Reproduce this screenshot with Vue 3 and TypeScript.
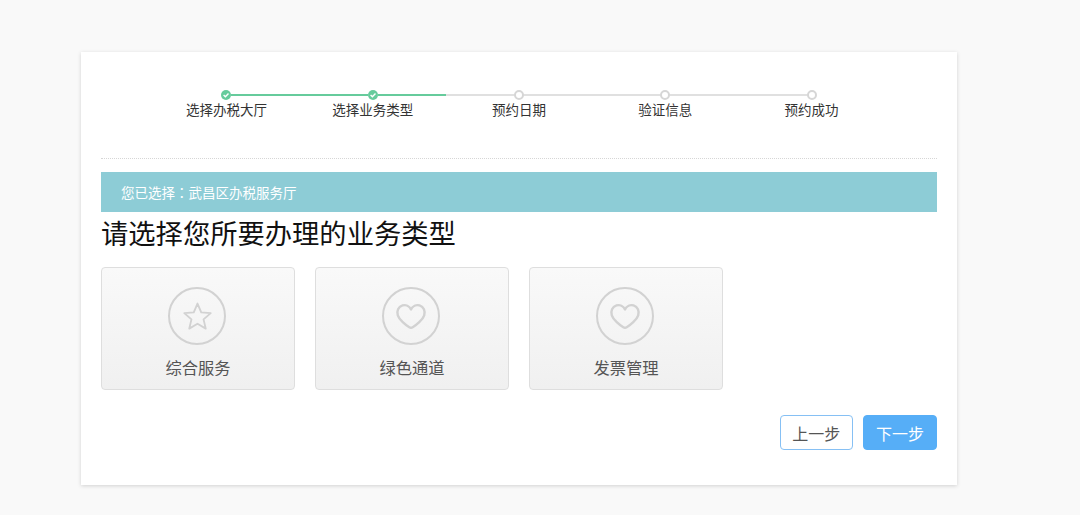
<script setup lang="ts">
interface Step { label: string; state: 'done' | 'current' | 'todo' }
interface Biz { label: string; icon: 'star' | 'heart' }
const steps: Step[] = [
  { label: '选择办税大厅', state: 'done' },
  { label: '选择业务类型', state: 'current' },
  { label: '预约日期', state: 'todo' },
  { label: '验证信息', state: 'todo' },
  { label: '预约成功', state: 'todo' },
]
const items: Biz[] = [
  { label: '综合服务', icon: 'star' },
  { label: '绿色通道', icon: 'heart' },
  { label: '发票管理', icon: 'heart' },
]
</script>

<template>
  <div class="page">
    <main class="card">
      <ol class="steps">
        <li v-for="(s, i) in steps" :key="s.label" class="step" :class="[s.state, { last: i === steps.length - 1 }]">
          <span class="node">
            <svg v-if="s.state !== 'todo'" viewBox="0 0 10 10" width="10" height="10">
              <circle cx="5" cy="5" r="5" fill="#66cb9c" />
              <path d="M2.6 5.1 4.4 6.8 7.5 3.6" fill="none" stroke="#fff" stroke-width="1.4" />
            </svg>
          </span>
          <span class="step-label">{{ s.label }}</span>
        </li>
      </ol>
      <div class="divider"></div>
      <div class="banner">您已选择<span class="colon">：</span>武昌区办税服务厅</div>
      <h1 class="title">请选择您所要办理的业务类型</h1>
      <div class="options">
        <button v-for="it in items" :key="it.label" class="option" type="button">
          <span class="circle">
            <svg v-if="it.icon === 'star'" viewBox="0 0 30 30" width="33" height="33">
              <path d="M15 3.2 18.4 11.2 27 11.9 20.5 17.6 22.5 26 15 21.6 7.5 26 9.5 17.6 3 11.9 11.6 11.2Z" fill="none" stroke="#d2d2d2" stroke-width="1.7" stroke-linejoin="round" />
            </svg>
            <svg v-else viewBox="0 0 30 30" width="36" height="36">
              <path d="M15 9.6C13.6 6.6 10.6 5.4 7.9 6.2 4.4 7.3 2.9 11 4 14.4 5.2 18.2 10.6 22.6 13.6 24.4 14.5 25 15.5 25 16.4 24.4 19.4 22.6 24.8 18.2 26 14.4 27.1 11 25.6 7.3 22.1 6.2 19.4 5.4 16.4 6.6 15 9.6Z" fill="none" stroke="#d2d2d2" stroke-width="2" stroke-linejoin="round" />
            </svg>
          </span>
          <span class="option-label">{{ it.label }}</span>
        </button>
      </div>
      <div class="actions">
        <button class="btn prev" type="button">上一步</button>
        <button class="btn next" type="button">下一步</button>
      </div>
    </main>
  </div>
</template>

<style>
html, body { margin: 0; background: #f9f9f9; }
</style>

<style scoped>
.page {
  width: 1080px;
  height: 515px;
  box-sizing: border-box;
  padding: 52px 123px 0 81px;
  background: #f9f9f9;
  overflow: hidden;
  font-family: "Noto Sans CJK SC", "Liberation Sans", sans-serif;
}
.card {
  height: 433px;
  box-sizing: border-box;
  padding: 38px 20px 0;
  background: #fff;
  box-shadow: 0 1px 4px rgba(0, 0, 0, 0.16);
}
.steps {
  list-style: none;
  margin: 0;
  padding: 0;
  display: flex;
  justify-content: center;
}
.step {
  position: relative;
  width: 146.3px;
  display: flex;
  flex-direction: column;
  align-items: center;
}
.step::after {
  content: "";
  position: absolute;
  left: 50%;
  top: 4px;
  width: 100%;
  height: 2px;
  background: #e0e0e0;
}
.step.done::after { background: #66cb9c; }
.step.current::after {
  background: linear-gradient(to right, #66cb9c 50%, #e0e0e0 50%);
}
.step.last::after { display: none; }
.node {
  position: relative;
  z-index: 1;
  width: 10px;
  height: 10px;
  box-sizing: border-box;
  border-radius: 50%;
  background: #fff;
  display: block;
}
.step.todo .node { border: 2px solid #d6d6d6; }
.node svg { display: block; }
.step-label {
  margin-top: -1px;
  height: 20px;
  line-height: 20px;
  font-size: 13.5px;
  color: #333;
  white-space: nowrap;
}
.divider {
  margin-top: 39px;
  border-top: 1px dotted #d6d6d6;
}
.banner {
  margin-top: 13px;
  height: 40px;
  line-height: 40px;
  padding-left: 20px;
  background: #8dccd6;
  color: #fff;
  font-size: 13.5px;
}
.colon { font-family: "Noto Sans CJK TC", sans-serif; }
.title {
  margin: 0;
  height: 44px;
  line-height: 40px;
  font-size: 27.3px;
  font-weight: 400;
  color: #111;
  white-space: nowrap;
}
.options {
  margin-top: 11px;
  display: flex;
  gap: 20px;
}
.option {
  width: 194px;
  height: 123px;
  box-sizing: border-box;
  padding: 19px 0 0;
  border: 1px solid #dedede;
  border-radius: 4px;
  background: linear-gradient(to bottom, #f9f9f9, #f0f0f0);
  display: flex;
  flex-direction: column;
  align-items: center;
  font-family: inherit;
}
.circle {
  width: 58px;
  height: 58px;
  margin-right: 2px;
  box-sizing: border-box;
  border: 2px solid #d2d2d2;
  border-radius: 50%;
  display: flex;
  align-items: center;
  justify-content: center;
}
.option-label {
  margin-top: 10px;
  line-height: 24px;
  font-size: 16.3px;
  color: #555;
}
.actions {
  margin-top: 25px;
  display: flex;
  justify-content: flex-end;
  gap: 10px;
}
.btn {
  width: 74px;
  height: 35px;
  box-sizing: border-box;
  padding: 0;
  border-radius: 4px;
  font-family: inherit;
  font-size: 16px;
  line-height: 1;
}
.prev {
  width: 73.5px;
  border: 1px solid #86c0f4;
  background: #fff;
  color: #555;
}
.next {
  border: 1px solid #56aef7;
  background: #56aef7;
  color: #fff;
}
</style>
